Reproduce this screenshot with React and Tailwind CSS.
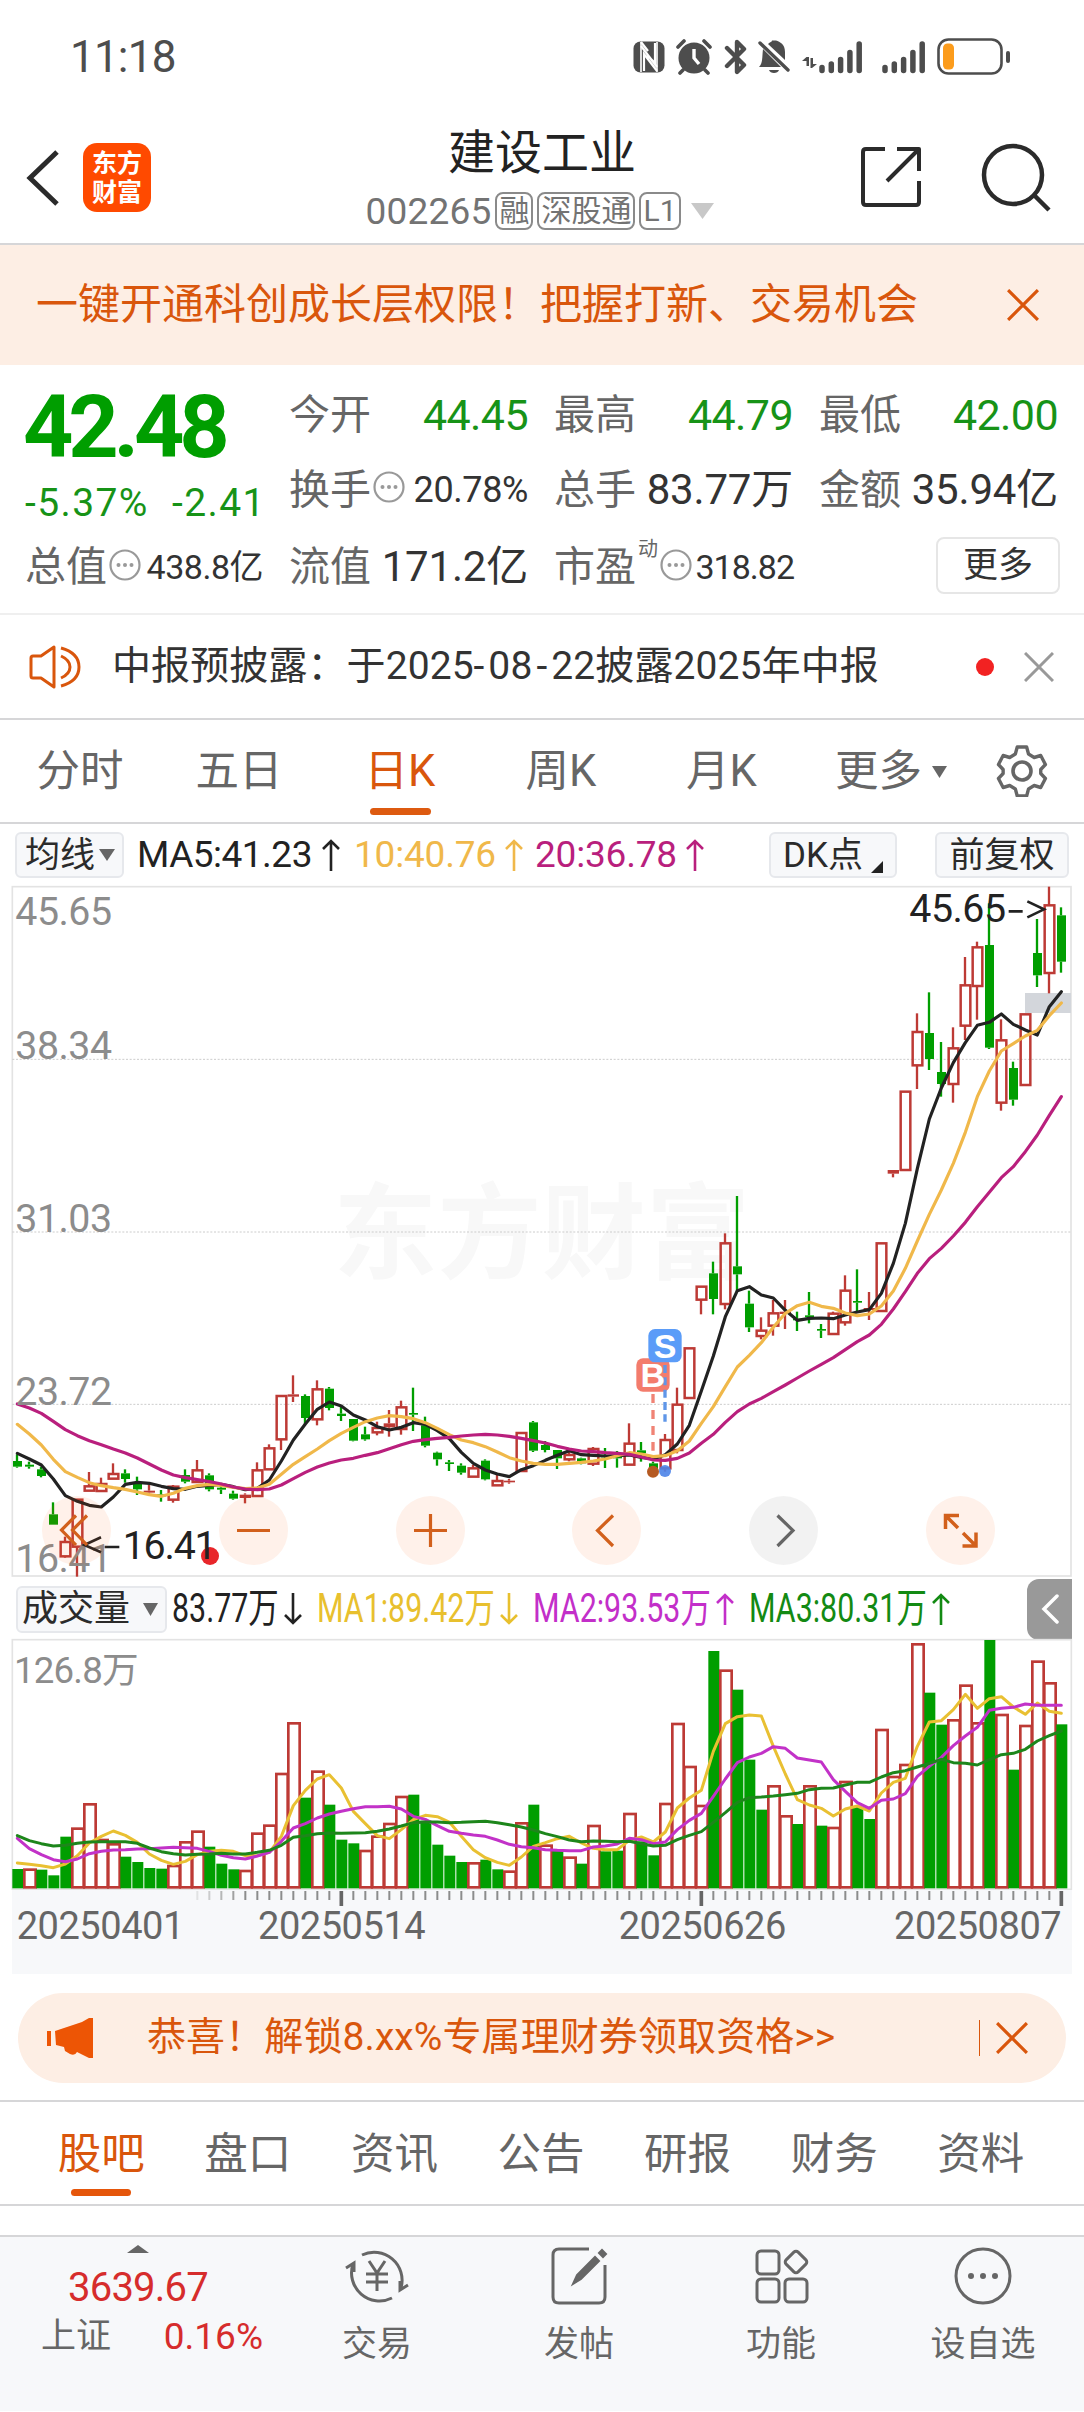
import clsx from 'clsx';

// Candle rows: [up, high, bodyTop, bodyBottom, low] in chart units (3 units = 1px)
const candles = [
    [0, 1723, 1743, 1760, 1763], [0, 1745, 1754, 1760, 1766], [0, 1760, 1768, 1788, 1792], [0, 1867, 1903, 1934, 1934],
    [1, 1970, 1985, 2029, 2033], [1, 1858, 1858, 2000, 2090], [1, 1776, 1818, 1832, 1832], [1, 1793, 1811, 1833, 1833],
    [1, 1750, 1781, 1796, 1796], [0, 1768, 1780, 1797, 1808], [0, 1790, 1811, 1828, 1845], [1, 1815, 1832, 1838, 1844],
    [0, 1830, 1843, 1849, 1865], [1, 1815, 1819, 1859, 1868], [0, 1768, 1785, 1805, 1810], [1, 1740, 1770, 1806, 1806],
    [0, 1780, 1786, 1828, 1834], [0, 1818, 1823, 1829, 1842], [0, 1832, 1841, 1856, 1859], [1, 1840, 1844, 1854, 1870],
    [1, 1747, 1770, 1848, 1848], [1, 1693, 1704, 1768, 1768], [1, 1547, 1547, 1678, 1710], [1, 1486, 1543, 1550, 1566],
    [0, 1543, 1548, 1614, 1633], [1, 1501, 1527, 1618, 1636], [0, 1521, 1526, 1584, 1591], [0, 1580, 1601, 1608, 1623],
    [0, 1617, 1617, 1682, 1684], [0, 1640, 1663, 1678, 1682], [1, 1625, 1643, 1657, 1666], [1, 1590, 1630, 1642, 1670],
    [1, 1562, 1581, 1647, 1664], [0, 1523, 1599, 1604, 1653], [0, 1610, 1636, 1697, 1702], [0, 1715, 1718, 1738, 1757],
    [0, 1740, 1747, 1752, 1773], [0, 1750, 1757, 1778, 1784], [1, 1755, 1764, 1790, 1790], [0, 1738, 1742, 1798, 1801],
    [1, 1785, 1802, 1816, 1816], [1, 1797, 1802, 1807, 1811], [1, 1658, 1658, 1773, 1773], [0, 1623, 1627, 1712, 1716],
    [0, 1683, 1695, 1710, 1717], [0, 1710, 1710, 1735, 1767], [1, 1710, 1724, 1738, 1744], [0, 1733, 1735, 1750, 1753],
    [1, 1701, 1706, 1751, 1758], [0, 1704, 1728, 1732, 1764], [0, 1713, 1731, 1735, 1763], [1, 1630, 1690, 1754, 1754],
    [0, 1686, 1711, 1720, 1745], [0, 1745, 1750, 1775, 1785], [1, 1662, 1679, 1765, 1775], [1, 1523, 1573, 1710, 1720],
    [1, 1404, 1404, 1554, 1554], [1, 1219, 1219, 1259, 1303], [0, 1145, 1180, 1257, 1303], [1, 1060, 1089, 1272, 1288],
    [0, 948, 1159, 1183, 1235], [0, 1232, 1271, 1342, 1356], [1, 1312, 1351, 1368, 1378], [1, 1260, 1299, 1337, 1367],
    [1, 1260, 1295, 1302, 1347], [0, 1295, 1316, 1321, 1353], [0, 1236, 1306, 1312, 1330], [0, 1332, 1347, 1352, 1374],
    [1, 1295, 1300, 1362, 1362], [1, 1186, 1231, 1327, 1337], [0, 1168, 1263, 1268, 1293], [1, 1236, 1284, 1290, 1320],
    [1, 1089, 1089, 1293, 1293], [1, 870, 870, 881, 892], [1, 634, 634, 870, 870], [1, 400, 455, 556, 627],
    [0, 337, 459, 537, 570], [0, 486, 576, 612, 650], [1, 442, 504, 612, 668], [1, 231, 315, 437, 480],
    [1, 185, 201, 318, 419], [0, 70, 195, 503, 507], [1, 418, 480, 668, 692], [0, 545, 564, 659, 677],
    [1, 402, 402, 615, 615], [0, 117, 219, 286, 321], [1, 20, 75, 279, 340], [0, 82, 106, 245, 278],
];

const ma5 = [
    1720, 1737, 1755, 1797, 1847, 1864, 1876, 1881, 1851, 1813, 1807, 1810, 1819, 1826, 1828, 1819, 1816, 1813, 1820, 1829,
    1825, 1800, 1743, 1680, 1632, 1588, 1566, 1578, 1605, 1620, 1640, 1650, 1642, 1628, 1633, 1652, 1676, 1717, 1750, 1770,
    1782, 1790, 1769, 1757, 1741, 1726, 1712, 1724, 1726, 1728, 1727, 1725, 1732, 1737, 1724, 1692, 1636, 1533, 1428, 1310,
    1232, 1220, 1245, 1254, 1291, 1321, 1315, 1314, 1316, 1305, 1296, 1289, 1240, 1150, 1030, 866, 717, 624, 548, 488,
    436, 427, 402, 433, 450, 465, 380, 335,
];
const ma10 = [
    1633, 1662, 1695, 1738, 1775, 1792, 1808, 1817, 1823, 1828, 1836, 1844, 1849, 1840, 1825, 1817, 1813, 1816, 1822, 1826,
    1824, 1813, 1783, 1753, 1730, 1707, 1682, 1660, 1642, 1625, 1614, 1607, 1610, 1616, 1628, 1645, 1664, 1680, 1688, 1700,
    1716, 1733, 1743, 1750, 1753, 1753, 1750, 1747, 1743, 1737, 1727, 1718, 1722, 1730, 1727, 1712, 1683, 1630, 1580, 1520,
    1461, 1426, 1388, 1342, 1300, 1277, 1267, 1279, 1285, 1299, 1307, 1302, 1278, 1233, 1165, 1083, 1003, 930, 850, 757,
    650, 573, 513, 491, 468, 451, 407, 369,
];
const ma20 = [
    1572, 1584, 1600, 1624, 1649, 1667, 1682, 1694, 1707, 1719, 1734, 1752, 1770, 1785, 1793, 1799, 1805, 1812, 1821, 1827,
    1829, 1827, 1815, 1796, 1777, 1761, 1749, 1740, 1735, 1726, 1718, 1706, 1694, 1684, 1679, 1675, 1672, 1668, 1665, 1663,
    1665, 1669, 1675, 1682, 1689, 1699, 1707, 1713, 1715, 1718, 1720, 1723, 1731, 1740, 1741, 1735, 1719, 1690, 1663, 1627,
    1595, 1572, 1555, 1535, 1515, 1494, 1473, 1453, 1433, 1409, 1385, 1365, 1333, 1287, 1235, 1180, 1136, 1105, 1068, 1027,
    980, 937, 893, 860, 815, 765, 706, 650,
];

// Top edge of each volume bar
const volumes = [
    898, 900, 900, 917, 801, 777, 704, 811, 824, 861, 877, 895, 897, 889, 818, 786, 831, 882, 899, 904,
    792, 768, 613, 461, 684, 606, 705, 810, 821, 844, 801, 763, 682, 675, 753, 825, 858, 877, 881, 870,
    899, 906, 761, 705, 828, 838, 864, 882, 769, 845, 843, 733, 815, 857, 703, 463, 592, 709, 244, 303,
    360, 570, 720, 650, 740, 763, 650, 768, 775, 637, 712, 748, 481, 622, 586, 224, 369, 465, 452, 348,
    461, 211, 436, 600, 469, 276, 341, 464,
];
// The volume colour does not always follow the candle colour
const redVolumes = new Set([
    1, 5, 6, 7, 8, 13, 14, 15, 19, 20, 21, 22, 23, 25, 29, 30, 31, 32, 38, 41, 42, 44, 46, 48, 51, 54, 55, 56, 57, 59,
    63, 64, 66, 68, 69, 72, 73, 74, 75, 78, 79, 80, 82, 84, 85, 86,
]);

const vma5 = [
    880, 884, 888, 894, 883, 858, 820, 800, 784, 797, 818, 853, 872, 884, 875, 855, 845, 842, 845, 858,
    858, 848, 800, 708, 662, 628, 615, 655, 725, 762, 798, 807, 780, 750, 737, 741, 757, 800, 840, 864,
    878, 887, 862, 830, 819, 807, 800, 820, 836, 840, 840, 812, 802, 817, 787, 715, 685, 662, 545, 462,
    441, 436, 439, 530, 613, 690, 706, 716, 739, 718, 709, 724, 670, 638, 626, 530, 457, 453, 420, 374,
    416, 387, 381, 412, 434, 400, 425, 431,
];
const vma10 = [
    806, 837, 855, 870, 876, 868, 852, 845, 841, 840, 838, 837, 835, 833, 834, 836, 845, 857, 864, 868,
    859, 848, 815, 775, 762, 745, 733, 725, 717, 711, 711, 710, 718, 740, 749, 768, 785, 791, 796, 800,
    811, 824, 831, 834, 840, 842, 843, 843, 832, 829, 823, 806, 810, 822, 817, 780, 752, 731, 680, 628,
    579, 562, 551, 531, 536, 565, 571, 577, 630, 665, 699, 716, 692, 688, 672, 620, 590, 563, 528, 499,
    473, 422, 416, 413, 403, 407, 407, 407,
];
const vma20 = [
    798, 813, 822, 829, 827, 821, 817, 816, 816, 816, 821, 835, 846, 852, 856, 854, 853, 851, 853, 853,
    848, 842, 827, 803, 798, 792, 790, 791, 790, 789, 785, 778, 769, 759, 757, 757, 759, 758, 756, 755,
    759, 765, 772, 781, 792, 801, 811, 816, 814, 815, 816, 815, 822, 829, 827, 810, 797, 786, 758, 729,
    698, 684, 682, 679, 675, 671, 660, 656, 655, 646, 638, 638, 622, 609, 603, 592, 581, 569, 579, 581,
    586, 570, 555, 551, 539, 514, 498, 484,
];

const xOf = (i) => 52 + i * 36;
const toPoints = (values) => values.map((y, i) => `${xOf(i)},${y}`).join(' ');

const Line = ({ values, color, width = 9.5 }) => (
    <polyline points={toPoints(values)} fill="none" stroke={color} strokeWidth={width} strokeLinejoin="round" strokeLinecap="round" />
);

const Candle = ({ index, data }) => {
    const [up, high, top, bottom, low] = data;
    const x = xOf(index);
    const h = bottom - top;
    const color = up ? '#bd3a35' : '#009e00';

    return (
        <g>
            {high < top && <line x1={x - 1} x2={x - 1} y1={high} y2={top} stroke={color} strokeWidth="7" />}
            {low > bottom && <line x1={x - 1} x2={x - 1} y1={bottom} y2={low} stroke={color} strokeWidth="7" />}
            {up && h > 12 ? (
                <rect x={x - 14} y={top + 1} width="29" height={h - 1} fill="none" stroke={color} strokeWidth="7.500" />
            ) : (
                <rect x={up ? x - 17 : x - 13} y={top} width={up ? 34 : 27} height={h} fill={color} />
            )}
        </g>
    );
};

const Caret = ({ className, up }) => (
    <svg viewBox="0 0 16 12" preserveAspectRatio="none" className={className} fill="currentColor">
        <path d={up ? 'M8 0 16 12H0z' : 'M0 0h16L8 12z'} />
    </svg>
);

const Arrow = ({ down, className }) => (
    <svg viewBox="0 0 20 32" className={clsx('h-8 w-5 shrink-0', className)} fill="none" stroke="currentColor" strokeWidth="2.6">
        <path d={down ? 'M10 0v30M2 22l8 8 8-8' : 'M10 32V2M2 10l8-8 8 8'} />
    </svg>
);

const Close = ({ className }) => (
    <svg viewBox="0 0 30 30" className={className} fill="none" stroke="currentColor" strokeWidth="3">
        <path d="M1 1l28 28M29 1 1 29" />
    </svg>
);

const Info = ({ className }) => (
    <svg viewBox="0 0 32 32" className={clsx('h-8 w-8 shrink-0', className)}>
        <circle cx="16" cy="16" r="14.500" fill="none" stroke="#999" strokeWidth="2.200" />
        <g fill="#999">
            <circle cx="9.500" cy="16" r="2" />
            <circle cx="16" cy="16" r="2" />
            <circle cx="22.500" cy="16" r="2" />
        </g>
    </svg>
);

const SignalBars = ({ className }) => (
    <svg viewBox="0 0 44 36" className={clsx('h-9 w-11', className)} stroke="#4d4d4d" strokeWidth="5.500" strokeLinecap="round">
        <path d="M3 28.500v3M12.300 25v6.500M21.600 20.500v11M30.900 13.500v18M40.200 5v26.500" />
    </svg>
);

const StatusBar = () => (
    <div className="flex h-[110px] items-center pl-[70px] pr-[73px] pt-[3px] text-[#4d4d4d]">
        <span className="text-[44px] leading-none tracking-[-0.8px]">11:18</span>
        <div className="ml-auto flex items-center">
            <svg viewBox="0 0 32 32" className="h-8 w-8">
                <rect x="0.500" y="0.500" width="31" height="31" rx="7" fill="#4d4d4d" />
                <path d="M8 1v30M24 1v30" stroke="#fff" strokeWidth="1.600" />
                <path d="M8 5l16 21M8 1l7 9M11 30V13l13 17M14 14l8 8V2" stroke="#fff" strokeWidth="2.200" fill="none" />
            </svg>
            <svg viewBox="0 0 36 36" className="ml-[11px] h-9 w-9" fill="#4d4d4d">
                <circle cx="18" cy="19" r="15.500" />
                <path d="M2 8l6-6M34 8l-6-6M7 31l-3 3M29 31l3 3" stroke="#4d4d4d" strokeWidth="3.600" strokeLinecap="round" />
                <path d="M18 10v9l5 6" stroke="#fff" strokeWidth="3.400" fill="none" />
            </svg>
            <svg viewBox="0 0 24 36" className="ml-3 h-9 w-6" fill="none" stroke="#4d4d4d" strokeWidth="4.400" strokeLinejoin="round" strokeLinecap="round">
                <path d="M3 9l17 17-7 7V3l7 7L3 27" />
            </svg>
            <svg viewBox="0 0 32 36" className="ml-2.5 mr-0.5 h-9 w-8" fill="#4d4d4d">
                <path d="M5 10l18 18H1c4-4 3-10 4-18z" />
                <path d="M10 5c2-2 4-2 4-3.500h4C22 3 27 5 27 13v8z" />
                <path d="M11 31h10c-1 4-9 4-10 0z" />
                <path d="M2 4l28 27" stroke="#4d4d4d" strokeWidth="3.400" strokeLinecap="round" />
            </svg>
            <svg viewBox="0 0 15 12" className="ml-2.5 mt-[13px] h-3 w-[15px]" fill="#4d4d4d">
                <path d="M4.500 0h2.500v9H4.500V4H0zM8.500 1H11v6h4l-5 4H8.500z" />
            </svg>
            <SignalBars className="ml-0.5" />
            <SignalBars className="ml-[19px]" />
            <svg viewBox="0 0 74 38" className="ml-[11px] h-[38px] w-[74px]">
                <rect x="1.500" y="1.500" width="63" height="34" rx="10" fill="none" stroke="#4d4d4d" strokeWidth="2.600" />
                <rect x="6" y="5.500" width="11" height="26" rx="4.500" fill="#fc9c1c" />
                <rect x="69" y="13" width="4" height="12" rx="2" fill="#4d4d4d" />
            </svg>
        </div>
    </div>
);

const Tag = ({ children }) => (
    <span className="flex h-[38px] items-center rounded-lg border-2 border-[#8a8a8a] px-0.5 text-[30px] leading-none">{children}</span>
);

const Header = () => (
    <header className="flex h-[135px] items-start border-b-2 border-[#d6d6d8]">
        <div className="flex w-[222px] items-center pl-[26px] pt-[33px]">
            <svg viewBox="0 0 34 56" className="h-14 w-[34px]" fill="none" stroke="#2b2b2b" strokeWidth="5">
                <path d="M31 2 4 28l27 26" />
            </svg>
            <div className="ml-[23px] flex h-[69px] w-[68px] flex-col items-center justify-center rounded-[14px] bg-[#ff4a00] text-[25px] font-bold leading-[29px] text-white">
                <span>东方</span>
                <span>财富</span>
            </div>
        </div>
        <div className="flex flex-1 flex-col items-center pt-[18px]">
            <h1 className="text-[47px] leading-[50px] text-[#222]">建设工业</h1>
            <div className="-ml-[5px] mt-[14px] flex items-center gap-1 text-[#737373]">
                <span className="text-[37px] leading-none tracking-[0.2px]">002265</span>
                <Tag>融</Tag>
                <Tag>深股通</Tag>
                <Tag>L1</Tag>
                <Caret className="ml-1.5 h-4 w-[23px] text-[#c8c8c8]" />
            </div>
        </div>
        <div className="flex w-[222px] items-center pt-8">
            <svg viewBox="0 0 60 60" className="-ml-px h-[60px] w-[60px]" fill="none" stroke="#2b2b2b" strokeWidth="4" strokeLinejoin="round">
                <path d="M24 2H5q-3 0-3 3v50q0 3 3 3h50q3 0 3-3V34" />
                <path d="M36 2h22v22M58 2 26 34" />
            </svg>
            <svg viewBox="0 0 70 70" className="ml-[60px] h-[70px] w-[70px]" fill="none" stroke="#2b2b2b" strokeWidth="4.500">
                <circle cx="32" cy="33" r="29" />
                <path d="M53 53l15 15" />
            </svg>
        </div>
    </header>
);

const Label = ({ children }) => <span className="text-[41px] leading-none text-[#666]">{children}</span>;

const Quote = () => (
    <section className="h-[250px] border-b-2 border-[#efefef] pl-[25px] pr-[26px] pt-[26px] leading-none text-[#333]">
        <div className="flex h-[148px]">
            <div className="w-[264px] shrink-0 text-[#009e00]">
                <div className="ml-[-2px] text-[88px] font-bold leading-[72px] tracking-[-5.2px]">42.48</div>
                <div className="mt-[18px] flex text-[39px] leading-[44px] text-[#179317]">
                    <span className="w-[147px] tracking-[1.4px]">-5.37%</span>
                    <span className="tracking-[1.4px]">-2.41</span>
                </div>
            </div>
            <div className="grid flex-1 grid-cols-3 grid-rows-[48px_48px] gap-x-[26px] gap-y-[27px]">
                <div className="flex items-center justify-between">
                    <Label>今开</Label>
                    <span className="text-[43px] tracking-[-0.6px] text-[#179317]">44.45</span>
                </div>
                <div className="flex items-center justify-between">
                    <Label>最高</Label>
                    <span className="text-[43px] tracking-[-0.6px] text-[#179317]">44.79</span>
                </div>
                <div className="flex items-center justify-between">
                    <Label>最低</Label>
                    <span className="text-[43px] tracking-[-0.6px] text-[#179317]">42.00</span>
                </div>
                <div className="flex items-center justify-between">
                    <Label>换手</Label>
                    <Info className="mb-1.5 ml-0.5 mr-auto" />
                    <span className="text-[36px] tracking-[-0.4px]">20.78%</span>
                </div>
                <div className="flex items-center justify-between">
                    <Label>总手</Label>
                    <span className="text-[42px] tracking-[-0.2px]">83.77万</span>
                </div>
                <div className="flex items-center justify-between">
                    <Label>金额</Label>
                    <span className="text-[42px] tracking-[-0.2px]">35.94亿</span>
                </div>
            </div>
        </div>
        <div className="-mt-px flex h-[58px] items-center">
            <div className="flex w-[238px] items-center">
                <Label>总值</Label>
                <Info className="mb-1 ml-0.5" />
                <span className="ml-auto text-[34px] tracking-[-0.5px]">438.8亿</span>
            </div>
            <div className="ml-[26px] flex w-[239px] items-center justify-between">
                <Label>流值</Label>
                <span className="text-[42px] tracking-[-0.2px]">171.2亿</span>
            </div>
            <div className="ml-[26px] flex w-[240px] items-center">
                <Label>市盈</Label>
                <span className="-mt-9 ml-0.5 text-[20px] text-[#666]">动</span>
                <Info className="mb-1 ml-0.5" />
                <span className="ml-auto text-[34px] tracking-[-1px]">318.82</span>
            </div>
            <div className="ml-auto -mr-[2px] mb-1 flex h-[57px] w-[124px] items-center justify-center rounded-lg border-2 border-[#e6e6e6] text-[35px]">更多</div>
        </div>
    </section>
);

const News = () => (
    <div className="flex h-[105px] items-center border-b-2 border-[#d6d6d8] pl-[29px] pr-[30px]">
        <svg viewBox="0 0 52 44" className="h-11 w-[52px]" fill="none" stroke="#d9560c" strokeWidth="3" strokeLinejoin="round">
            <path d="M2 13q0-2 2-2h8L25 2v40L12 33H4q-2 0-2-2z" />
            <path d="M32 3q18 5 18 19T32 41M32 11q9 4 9 11t-9 11" />
        </svg>
        <span className="ml-[31px] text-[39px] leading-none tracking-[0.1px] text-[#333]">
            中报预披露：于2025<span className="tracking-[2px]"> </span>
            <span className="-ml-[12px]">-</span>
            <span className="ml-1">08</span>
            <span className="ml-1">-</span>
            <span className="ml-1">22披露2025年中报</span>
        </span>
        <span className="ml-auto h-[18px] w-[18px] rounded-full bg-[#f22222]"></span>
        <Close className="ml-[30px] h-[30px] w-[30px] text-[#999]" />
    </div>
);

const periods = [
    { name: '分时', box: 'w-[160px]' },
    { name: '五日', box: 'w-[158px]' },
    { name: '日K', box: 'w-[164px]', active: true },
    { name: '周K', box: 'w-[158px]' },
    { name: '月K', box: 'w-[163px]' },
];

const PeriodTabs = () => (
    <nav className="flex h-[104px] items-center border-b-2 border-[#d6d6d8] text-[43.500px] leading-none text-[#666]">
        {periods.map((p) => (
            <div key={p.name} className={clsx('relative flex h-full items-center justify-center pt-0.5', p.box, p.active && 'text-[#d9560c]')}>
                {p.name}
                {p.active && <span className="absolute bottom-[7px] h-[7px] w-[61px] rounded-full bg-[#dd5a10]"></span>}
            </div>
        ))}
        <div className="ml-8 flex items-center pt-0.5">
            更多
            <Caret className="ml-2.5 h-3 w-[15px]" />
        </div>
        <svg viewBox="0 0 52 52" className="ml-[49px] h-[52px] w-[52px]" fill="none" stroke="#666" strokeWidth="3.600" strokeLinejoin="round">
            <path d="M21 2h10l2 7 6 3.500 7-2 5 9-5 5v4l5 5-5 9-7-2-6 3.500-2 7H21l-2-7-6-3.500-7 2-5-9 5-5v-4l-5-5 5-9 7 2L19 9z" transform="translate(1.500 0) scale(.94 1)" />
            <circle cx="26" cy="26" r="9" />
        </svg>
    </nav>
);

const Chip = ({ className, children }) => (
    <div className={clsx('flex h-[46px] shrink-0 items-center rounded-md border-2 border-[#e6e8ec] bg-[#f7f8fa] text-[35px] leading-none text-[#2b2b2b]', className)}>
        {children}
    </div>
);

const MaBar = () => (
    <div className="flex h-[56px] items-end pb-0.5 pl-[15px] pr-[15px] text-[37px] leading-[46px]">
        <Chip className="w-[109px] pl-2">
            均线
            <Caret className="ml-1 h-3 w-4 text-[#666]" />
        </Chip>
        <div className="ml-[13px] flex w-[217px] items-center text-[#222]">
            <span className="w-[184px] tracking-[-0.5px]">MA5:41.23</span>
            <Arrow />
        </div>
        <div className="flex w-[181px] items-center text-[#f0b84a]">
            <span className="w-[150px] tracking-[-0.2px]">10:40.76</span>
            <Arrow />
        </div>
        <div className="flex items-center text-[#b91f7d]">
            <span className="w-[150px] tracking-[-0.2px]">20:36.78</span>
            <Arrow />
        </div>
        <Chip className="ml-auto w-[128px] pl-3">
            DK点
            <svg viewBox="0 0 12 12" className="ml-2 mt-6 h-3 w-3">
                <path d="M12 0v12H0z" fill="#222" />
            </svg>
        </Chip>
        <Chip className="ml-[38px] w-[134px] justify-center">前复权</Chip>
    </div>
);

const RoundButton = ({ muted, children }) => (
    <button className={clsx('h-[69px] w-[69px] rounded-full', muted ? 'bg-black/5' : 'bg-[#ff5a0a]/[0.085]')}>
        <svg viewBox="0 0 69 69" className="h-full w-full" fill="none" stroke={muted ? '#666' : '#d2601c'} strokeWidth="3.200">
            {children}
        </svg>
    </button>
);

// Baseline and label of each step on the price scale
const scale = [
    [135, '45.65'],
    [536, '38.34'],
    [1055, '31.03'],
    [1574, '23.72'],
    [2077, '16.41'],
];

const KChart = () => (
    <div className="relative h-[700px]">
        <svg viewBox="0 0 3252 2100" className="block h-[700px] w-full overflow-visible">
            <text x="1000" y="1172" fontSize="312" fontWeight="700" fill="#f8f8f8" textLength="1250">东方财富</text>
            <rect x="37" y="20" width="3176" height="2068" fill="none" stroke="#e3e3e3" strokeWidth="5" />
            {[538, 1056, 1573].map((y) => (
                <line key={y} x1="37" x2="3213" y1={y} y2={y} stroke="#cccccc" strokeWidth="3" strokeDasharray="6 5" />
            ))}
            <rect x="3075" y="339" width="138" height="60" fill="#d3d6db" />
            {candles.map((c, i) => (
                <Candle key={i} index={i} data={c} />
            ))}
            <Line values={ma5} color="#222" />
            <Line values={ma10} color="#f0b84a" />
            <Line values={ma20} color="#b91f7d" />

            {/* Buy and sell marks */}
            <line x1="1959" x2="1959" y1="1542" y2="1712" stroke="#f08375" strokeWidth="10" strokeDasharray="27 21" />
            <rect x="1909" y="1435" width="100" height="100" rx="20" fill="#f37c6c" />
            <rect x="1945" y="1347" width="100" height="100" rx="20" fill="#5b9cf8" />
            <line x1="1995" x2="1995" y1="1455" y2="1625" stroke="#5f96e8" strokeWidth="10" strokeDasharray="24 13" />
            <text x="1958" y="1522" fontSize="102" fontWeight="700" fill="#fff" textAnchor="middle" className="font-['Liberation_Sans',sans-serif]">B</text>
            <text x="1995" y="1434" fontSize="102" fontWeight="700" fill="#fff" textAnchor="middle" className="font-['Liberation_Sans',sans-serif]">S</text>
            <circle cx="1959" cy="1775" r="18" fill="#b55a22" />
            <circle cx="1995" cy="1773" r="18" fill="#4d84e8" fillOpacity="0.9" />

            {scale.map(([y, label]) => (
                <text key={label} x="46" y={y} fontSize="118" fill="#8c8c8c" textLength="290">{label}</text>
            ))}
            <text x="2728" y="127" fontSize="118" fill="#222" textLength="290">45.65</text>
            <path d="M3026 94h42M3082 64l50 24-50 24" fill="none" stroke="#222" strokeWidth="8" />
            <circle cx="630" cy="2028" r="27" fill="#e8262a" />
            <text x="368" y="2036" fontSize="118" fill="#222" textLength="282">16.41</text>
            <path d="M358 2001h-44M303 1972l-50 23 50 22" fill="none" stroke="#222" strokeWidth="8" />
        </svg>
        <div className="absolute bottom-[15px] left-[42px] flex gap-[107.8px]">
            <RoundButton>
                <path d="M34 19.500 19.500 34 34 49M45 19.500 30.500 34 45 49" />
            </RoundButton>
            <RoundButton>
                <path d="M18 34.500h33" />
            </RoundButton>
            <RoundButton>
                <path d="M18 34.500h33M34.500 18v33" />
            </RoundButton>
            <RoundButton>
                <path d="M41 19.500 25.500 34.500 41 50" />
            </RoundButton>
            <RoundButton muted>
                <path d="M28.500 19.500 44 34.500 28.500 50" />
            </RoundButton>
            <RoundButton>
                <path d="M19.500 33V19.500H33M20 20l12 12M37 37l13 13M50 36.500V50H36.500" strokeWidth="3.500" />
            </RoundButton>
        </div>
    </div>
);

const Squeezed = ({ className, children }) => (
    <span className={clsx('block shrink-0 whitespace-nowrap', className)}>
        <span className="inline-block origin-left scale-x-[0.76]">{children}</span>
    </span>
);

const VolumeBar = () => (
    <div className="flex h-[58px] items-center pl-4 text-[40px] leading-none">
        <Chip className="h-[47px] w-[151px] pl-1 text-[36px]">
            成交量
            <Caret className="ml-[13px] h-[13px] w-[15px] text-[#666]" />
        </Chip>
        <div className="ml-[5px] flex w-[145px] items-center text-[#222]">
            <Squeezed className="w-[111px]">83.77万</Squeezed>
            <Arrow down />
        </div>
        <div className="flex w-[216px] items-center text-[#e8c02e]">
            <Squeezed className="w-[182px]">MA1:89.42万</Squeezed>
            <Arrow down />
        </div>
        <div className="flex w-[216px] items-center text-[#c32fc9]">
            <Squeezed className="w-[182px]">MA2:93.53万</Squeezed>
            <Arrow />
        </div>
        <div className="flex items-center text-[#138a13]">
            <Squeezed className="w-[182px]">MA3:80.31万</Squeezed>
            <Arrow />
        </div>
        <div className="ml-auto mr-3 flex h-[61px] w-[45px] items-center justify-center rounded-l-xl bg-[#999]">
            <svg viewBox="0 0 18 30" className="h-[30px] w-[18px]" fill="none" stroke="#fff" strokeWidth="3.500" strokeLinecap="round">
                <path d="M16 2 3 15l13 13" />
            </svg>
        </div>
    </div>
);

const VolumeChart = () => (
    <svg viewBox="0 205 3252 756" className="block h-[252px] w-full">
        <rect x="37" y="210" width="3177" height="749" fill="none" stroke="#e3e3e3" strokeWidth="5" />
        {volumes.map((top, i) =>
            redVolumes.has(i) ? (
                <rect key={i} x={xOf(i) - 15} y={top} width="34" height={953 - top} fill="#fff" stroke="#bd3a35" strokeWidth="8" />
            ) : (
                <rect key={i} x={xOf(i) - 15} y={top} width="33" height={956 - top} fill="#009e00" />
            )
        )}
        <Line values={vma5} color="#e9c032" width={9} />
        <Line values={vma10} color="#c232c8" width={9} />
        <Line values={vma20} color="#1d861b" width={9} />
        <text x="42" y="341" fontSize="110" fill="#8c8c8c" textLength="374">126.8万</text>
    </svg>
);

const dates = [
    ['20250401', 50],
    ['20250514', 774],
    ['20250626', 1856],
    ['20250807', 2682],
];

const DateAxis = () => (
    <svg viewBox="0 0 3252 252" className="block h-[84px] w-full">
        <rect x="36" width="3180" height="252" fill="#f7f8fa" />
        {candles.map((_, i) => {
            if (i < 15) return null;
            const major = i % 30 === 27;
            return (
                <line
                    key={i}
                    x1={xOf(i)}
                    x2={xOf(i)}
                    y1="3"
                    y2={major ? 48 : 30}
                    stroke={major ? '#666' : '#8c8c8c'}
                    strokeWidth={major ? 11 : 6}
                    opacity={Math.min(1, (i - 14) / 5)}
                />
            );
        })}
        {dates.map(([label, x]) => (
            <text key={label} x={x} y="147" fontSize="114" fill="#666" textLength="503">{label}</text>
        ))}
    </svg>
);

const Promo = () => (
    <div className="mx-[18px] mt-[19px] flex h-[90px] items-center rounded-full bg-[#fdeee4] pl-[29px] pr-[38px] text-[#d9560c]">
        <svg viewBox="0 0 47 40" className="h-10 w-[47px]" fill="#ed5505">
            <path d="M0 13h4v15H0zM8 13 35 4l7-4h4v40h-4l-12-6q-2 4-7 2l-5-3-1-4-8-2z" />
        </svg>
        <span className="ml-[53px] pb-0.5 text-[39px] leading-none tracking-[0.1px]">恭喜！解锁8.xx%专属理财券领取资格&gt;&gt;</span>
        <span className="ml-auto h-9 w-px bg-[#d9560c]"></span>
        <Close className="ml-4 h-8 w-8" />
    </div>
);

const sections = ['股吧', '盘口', '资讯', '公告', '研报', '财务', '资料'];

const SectionTabs = () => (
    <nav className="mt-[17px] flex h-[106px] items-center border-y-2 border-[#d6d6d8] pl-[28px] pr-[30px] text-[43.500px] leading-none text-[#666]">
        {sections.map((name, i) => (
            <div key={name} className={clsx('relative flex h-full flex-1 items-center justify-center pt-[3px]', i === 0 && 'text-[#d9560c]')}>
                {name}
                {i === 0 && <span className="absolute bottom-[8px] h-[7px] w-[60px] rounded-full bg-[#e5560b]"></span>}
            </div>
        ))}
    </nav>
);

const NavItem = ({ label, className, children }) => (
    <div className={clsx('flex flex-col items-center pt-[7px]', className)}>
        <svg viewBox="0 0 64 64" className="h-16 w-16" fill="none" stroke="#666" strokeWidth="3">
            {children}
        </svg>
        <span className="mt-[17px] text-[35px] leading-10">{label}</span>
    </div>
);

const BottomBar = () => (
    <footer className="flex h-[176px] border-t-2 border-[#d6d6d8] bg-[#f7f8fa] text-[#666]">
        <div className="flex w-[276px] flex-col items-center">
            <Caret up className="mt-2 h-2 w-[22px]" />
            <span className="mt-[15px] text-[40px] leading-10 tracking-[-0.8px] text-[#d62c2c]">3639.67</span>
            <div className="mt-[9px] flex w-full items-center justify-between pl-[41px] pr-[13px] leading-10">
                <span className="text-[35px]">上证</span>
                <span className="text-[37px] text-[#d62c2c]">0.16%</span>
            </div>
        </div>
        <NavItem label="交易" className="w-[202px]">
            <path d="M17 11a28 28 0 0 1 39 33M47 54A28 28 0 0 1 8 20" />
            <path d="M1 24l8-5v9M63 41l-8 5v-9" />
            <path d="M24 17l8 12 8-12M21 30h22M21 38h22M32 29v18" />
        </NavItem>
        <NavItem label="发帖" className="w-[202px]">
            <path d="M42 5H12q-6 0-6 6v42q0 6 6 6h40q6 0 6-6V21" />
            <path d="M26 40l4-9L48 13l4 4-18 18zM52 9l3-3 4 4-3 3z" fill="#666" strokeWidth="2" />
        </NavItem>
        <NavItem label="功能" className="w-[202px]">
            <rect x="8" y="7" width="22" height="23" rx="4" />
            <rect x="8" y="35" width="22" height="23" rx="4" />
            <rect x="36" y="35" width="22" height="23" rx="4" />
            <rect x="38.500" y="9.500" width="17" height="17" rx="3" transform="rotate(45 47 18)" />
        </NavItem>
        <NavItem label="设自选" className="w-[202px]">
            <circle cx="32" cy="32" r="27" />
            <g fill="#666" stroke="none">
                <circle cx="20" cy="32" r="3" />
                <circle cx="32" cy="32" r="3" />
                <circle cx="44" cy="32" r="3" />
            </g>
        </NavItem>
    </footer>
);

export default function App() {
    return (
        <div className="h-[2412px] w-[1084px] overflow-hidden bg-white font-['Roboto','Noto_Sans_CJK_SC',sans-serif]">
            <StatusBar />
            <Header />
            <div className="flex h-[120px] items-center justify-between bg-[#fdeee4] pl-9 pr-[45px] text-[42px] leading-none text-[#d9560c]">
                一键开通科创成长层权限！把握打新、交易机会
                <Close className="h-8 w-8" />
            </div>
            <Quote />
            <News />
            <PeriodTabs />
            <MaBar />
            <KChart />
            <VolumeBar />
            <VolumeChart />
            <DateAxis />
            <Promo />
            <SectionTabs />
            <div className="h-[29px]"></div>
            <BottomBar />
        </div>
    );
}
